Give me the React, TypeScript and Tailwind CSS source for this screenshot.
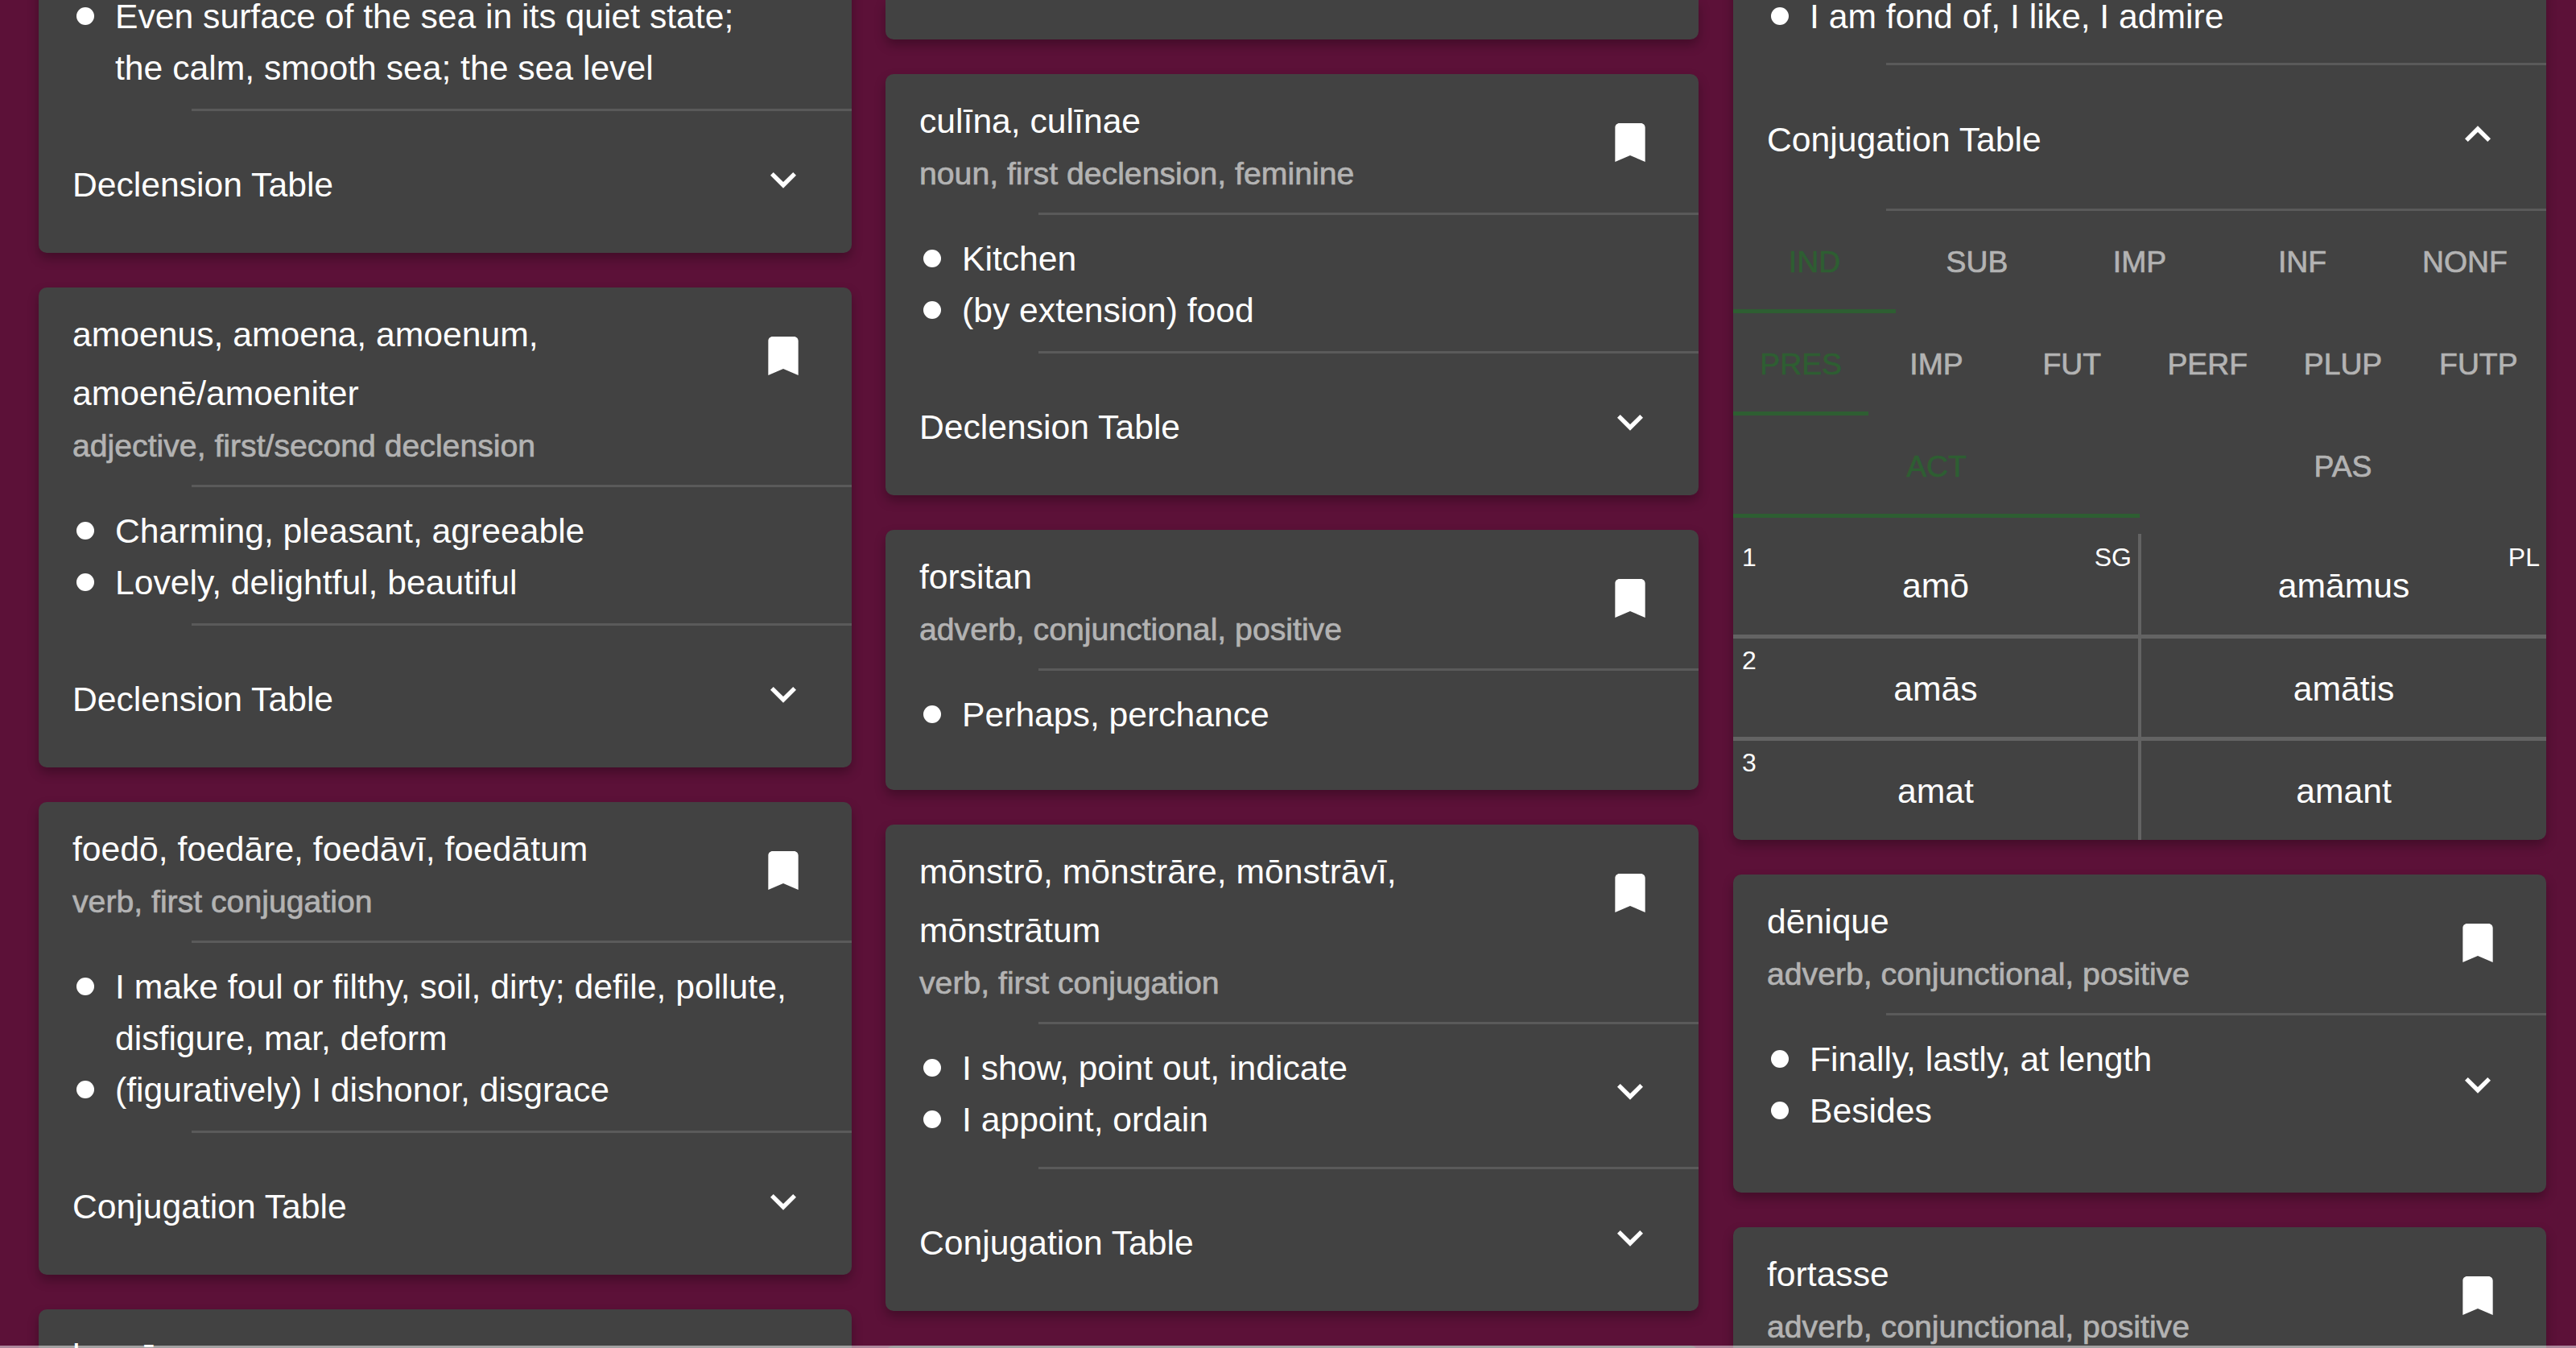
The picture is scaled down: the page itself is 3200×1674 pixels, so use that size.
import React from "react";
import { MdBookmark, MdKeyboardArrowDown, MdKeyboardArrowUp } from "react-icons/md";

interface WordCardProps {
  title: string[];
  subtitle: string;
  items?: string[][];
  table?: string;
  listChevron?: boolean;
  listExtra?: boolean;
  children?: React.ReactNode;
}

const Divider = () => <div className="ml-[190px] h-[3px] bg-[#5a5a5a]" />;

const TableRow = ({ label, open }: { label: string; open?: boolean }) => (
  <div className={`flex items-center justify-between pl-[42px] pr-[53px] ${open ? "h-[178px]" : "h-[176px]"}`}>
    <span className="pt-[5px]">{label}</span>
    <span className="-mt-[7px]">
      {open ? <MdKeyboardArrowUp size={64} color="#fff" /> : <MdKeyboardArrowDown size={64} color="#fff" />}
    </span>
  </div>
);

const WordCard: React.FC<WordCardProps> = ({ title, subtitle, items, table, listChevron, listExtra, children }) => (
  <div className="w-[1010px] shrink-0 overflow-hidden rounded-[10px] bg-[#424242] shadow-[0_7px_14px_rgba(0,0,0,0.28)]">
    <div className="flex justify-between pb-[20px] pl-[42px] pr-[53px] pt-[22px]">
      <div>
        {title.map((line) => (
          <div key={line} className="leading-[73px]">{line}</div>
        ))}
        <div className="text-[39.2px] leading-[57px] text-[#b3b3b3] [-webkit-text-stroke:0.7px]">{subtitle}</div>
      </div>
      <MdBookmark size={64} color="#fff" className="mt-[31px] shrink-0" />
    </div>
    <Divider />
    {items && (
      <div
        className={`flex items-center justify-between pr-[53px] pt-[22px] ${
          listExtra ? "pb-[26px]" : listChevron && table ? "pb-[27px]" : "pb-[19px]"
        }`}
      >
        <ul className="pl-[47px]">
          {items.map((lines) => (
            <li key={lines[0]} className="flex gap-[26px] leading-[64px]">
              <span className="mt-[21px] h-[22px] w-[22px] shrink-0 rounded-full bg-white" />
              <span>
                {lines.map((l) => (
                  <div key={l}>{l}</div>
                ))}
              </span>
            </li>
          ))}
        </ul>
        {listChevron && <MdKeyboardArrowDown size={64} color="#fff" className={table ? "-mt-[6px]" : ""} />}
      </div>
    )}
    {table && (
      <>
        <Divider />
        <TableRow label={table} />
      </>
    )}
    {children}
  </div>
);

const TabRow = ({ tabs, cols }: { tabs: string[]; cols: string }) => (
  <div className={`grid ${cols} h-[127px]`}>
    {tabs.map((tab, i) => (
      <div
        key={tab}
        className={`flex items-center justify-center border-b-[5px] pt-[5px] text-[37.33px] [-webkit-text-stroke:0.7px] ${
          i === 0 ? "border-[#2e5e32] text-[#2e5e32]" : "border-transparent text-[#b3b3b3]"
        }`}
      >
        {tab}
      </div>
    ))}
  </div>
);

const ConjugationGrid = () => (
  <div className="mt-[20px]">
    <div className="grid h-[130px] grid-cols-[507px_1fr] border-b-[5px] border-[#636363]">
      <div className="relative flex items-center justify-center border-r-[4px] border-[#636363] pt-[3px]">
        <span className="absolute left-[11px] top-[10px] text-[32px] leading-[38px]">1</span>
        <span className="absolute right-[8px] top-[10px] text-[32px] leading-[38px]">SG</span>
        amō
      </div>
      <div className="relative flex items-center justify-center pt-[3px]">
        <span className="absolute right-[8px] top-[10px] text-[32px] leading-[38px]">PL</span>
        amāmus
      </div>
    </div>
    <div className="grid h-[127px] grid-cols-[507px_1fr] border-b-[5px] border-[#636363]">
      <div className="relative flex items-center justify-center border-r-[4px] border-[#636363] pt-[1px]">
        <span className="absolute left-[11px] top-[8px] text-[32px] leading-[38px]">2</span>
        amās
      </div>
      <div className="flex items-center justify-center pt-[1px]">amātis</div>
    </div>
    <div className="grid h-[123px] grid-cols-[507px_1fr]">
      <div className="relative flex items-center justify-center border-r-[4px] border-[#636363]">
        <span className="absolute left-[11px] top-[8px] text-[32px] leading-[38px]">3</span>
        amat
      </div>
      <div className="flex items-center justify-center">amant</div>
    </div>
  </div>
);

export default function App() {
  return (
    <div className="relative flex h-[1674px] gap-[42px] overflow-hidden bg-[#5c1138] pl-[48px] font-['Liberation_Sans',sans-serif] text-[42.67px] text-white">
      <div className="flex -mt-[209px] flex-col gap-[43px]">
        <WordCard
          title={["aequor, aequoris"]}
          subtitle="noun, third declension, neuter"
          items={[["Even surface of the sea in its quiet state;", "the calm, smooth sea; the sea level"]]}
          table="Declension Table"
        />
        <WordCard
          title={["amoenus, amoena, amoenum,", "amoenē/amoeniter"]}
          subtitle="adjective, first/second declension"
          items={[["Charming, pleasant, agreeable"], ["Lovely, delightful, beautiful"]]}
          table="Declension Table"
        />
        <WordCard
          title={["foedō, foedāre, foedāvī, foedātum"]}
          subtitle="verb, first conjugation"
          items={[
            ["I make foul or filthy, soil, dirty; defile, pollute,", "disfigure, mar, deform"],
            ["(figuratively) I dishonor, disgrace"],
          ]}
          table="Conjugation Table"
        />
        <WordCard title={["humō"]} subtitle="verb, first conjugation" />
      </div>
      <div className="flex flex-col gap-[43px]">
        <div className="h-[49px] w-[1010px] shrink-0 rounded-b-[10px] bg-[#424242] shadow-[0_7px_14px_rgba(0,0,0,0.28)]" />
        <WordCard
          title={["culīna, culīnae"]}
          subtitle="noun, first declension, feminine"
          items={[["Kitchen"], ["(by extension) food"]]}
          table="Declension Table"
        />
        <WordCard title={["forsitan"]} subtitle="adverb, conjunctional, positive" items={[["Perhaps, perchance"]]}>
          <div className="h-[43px]" />
        </WordCard>
        <WordCard
          title={["mōnstrō, mōnstrāre, mōnstrāvī,", "mōnstrātum"]}
          subtitle="verb, first conjugation"
          items={[["I show, point out, indicate"], ["I appoint, ordain"]]}
          listChevron
          table="Conjugation Table"
        />
        <div className="h-[40px] w-[1010px] shrink-0 rounded-t-[10px] bg-[#424242]" />
      </div>
      <div className="ml-[1px] flex -mt-[209px] flex-col gap-[43px]">
        <WordCard
          title={["amō, amāre, amāvī, amātum"]}
          subtitle="verb, first conjugation"
          items={[["I am fond of, I like, I admire"]]}
          listExtra
        >
          <Divider />
          <TableRow label="Conjugation Table" open />
          <Divider />
          <TabRow tabs={["IND", "SUB", "IMP", "INF", "NONF"]} cols="grid-cols-5" />
          <TabRow tabs={["PRES", "IMP", "FUT", "PERF", "PLUP", "FUTP"]} cols="grid-cols-6" />
          <TabRow tabs={["ACT", "PAS"]} cols="grid-cols-2" />
          <ConjugationGrid />
        </WordCard>
        <WordCard
          title={["dēnique"]}
          subtitle="adverb, conjunctional, positive"
          items={[["Finally, lastly, at length"], ["Besides"]]}
          listChevron
        >
          <div className="h-[51px]" />
        </WordCard>
        <WordCard title={["fortasse"]} subtitle="adverb, conjunctional, positive" />
      </div>
      {/* thin translucent strip along the bottom of the window */}
      <div className="absolute inset-x-0 bottom-0 h-[3px] bg-white/50" />
    </div>
  );
}
